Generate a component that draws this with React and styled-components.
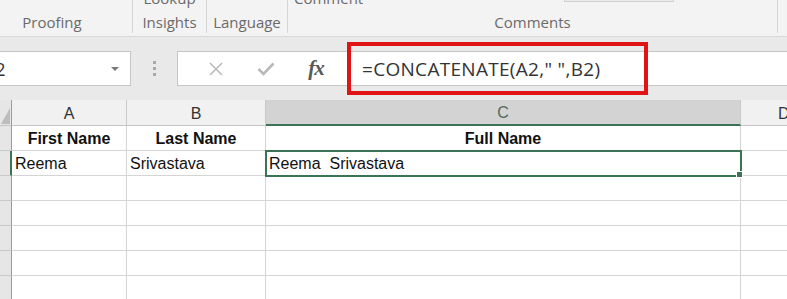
import React from "react"
import styled, { createGlobalStyle } from "styled-components"

const GlobalStyle = createGlobalStyle`
  html, body {
    margin: 0;
    padding: 0;
    background: #e9e9e9;
  }
  * {
    box-sizing: border-box;
  }
`

const green = "#3b7357"

const groups = [
  { label: "Proofing", top: "", width: 161, offset: -28 },
  { label: "Insights", top: "Lookup", width: 74 },
  { label: "Language", top: "", width: 81 },
  { label: "Comments", top: "Comment", width: 490, button: true, topLeft: true },
]

const columns = [
  { name: "A", width: 115 },
  { name: "B", width: 139 },
  { name: "C", width: 475, selected: true },
  { name: "D", width: 80 },
]

const rows = [
  { n: 1, cells: [{ text: "First Name", bold: true }, { text: "Last Name", bold: true }, { text: "Full Name", bold: true }, {}] },
  { n: 2, selected: true, cells: [{ text: "Reema" }, { text: "Srivastava" }, { text: "Reema\u00a0\u00a0Srivastava", active: true }, {}] },
  { n: 3, cells: [{}, {}, {}, {}] },
  { n: 4, cells: [{}, {}, {}, {}] },
  { n: 5, cells: [{}, {}, {}, {}] },
  { n: 6, cells: [{}, {}, {}, {}] },
  { n: 7, cells: [{}, {}, {}, {}] },
]

const App = () => {
  return (
    <Page>
      <GlobalStyle />
      <Ribbon>
        {groups.map((g) => (
          <Group key={g.label} $width={g.width} $offset={g.offset || 0}>
            {g.button && <GhostButton />}
            <TopText $left={g.topLeft}>{g.top || "\u00a0"}</TopText>
            <GroupLabel>{g.label}</GroupLabel>
          </Group>
        ))}
      </Ribbon>

      <FormulaRow>
        <NameBox>
          <span>C2</span>
          <DropArrow />
        </NameBox>
        <Grip>
          <i />
          <i />
          <i />
        </Grip>
        <ButtonBox>
          <IconButton>
            <svg width="16" height="16" viewBox="0 0 16 16">
              <path d="M2 2 L14 14 M14 2 L2 14" stroke="#b8b8b8" strokeWidth="1.5" fill="none" />
            </svg>
          </IconButton>
          <IconButton>
            <svg width="18" height="14" viewBox="0 0 18 14">
              <path d="M1.5 7 L6.5 12 L16.5 1.5" stroke="#b8b8b8" strokeWidth="2.6" fill="none" />
            </svg>
          </IconButton>
          <FxLabel>fx</FxLabel>
        </ButtonBox>
        <FormulaInput>
          =CONCATENATE(A2," ",B2)
          <Annotation />
        </FormulaInput>
      </FormulaRow>

      <Sheet>
        <Corner>
          <svg width="10" height="19" viewBox="0 0 10 19">
            <polygon points="9,2 9,18 0,18" fill="#bdbdbd" />
          </svg>
        </Corner>
        {columns.map((c) => (
          <ColHeader key={c.name} $selected={c.selected} $last={c.name === "D"}>
            {c.name}
          </ColHeader>
        ))}
        {rows.map((r) => (
          <React.Fragment key={r.n}>
            <RowHeader $selected={r.selected} />
            {r.cells.map((cell, i) => (
              <Cell
                key={i}
                $bold={cell.bold}
                $active={cell.active}
                $last={i === columns.length - 1}
              >
                {cell.text}
              </Cell>
            ))}
          </React.Fragment>
        ))}
      </Sheet>
    </Page>
  )
}

const Page = styled.div`
  width: 787px;
  height: 299px;
  overflow: hidden;
  display: flex;
  flex-direction: column;
  background: #e9e9e9;
`

const Ribbon = styled.div`
  height: 37px;
  flex-shrink: 0;
  display: flex;
  align-items: flex-start;
  background: #f3f3f3;
  border-bottom: 1px solid #d9d9d9;
  overflow: hidden;
`

const Group = styled.div`
  position: relative;
  width: ${(p) => p.$width}px;
  margin-left: ${(p) => p.$offset}px;
  height: 33px;
  display: flex;
  flex-direction: column;
  justify-content: flex-end;
  align-items: center;
  border-right: 1px solid #d6d6d6;
  flex-shrink: 0;
  font-family: "Open Sans", "Noto Sans", sans-serif;
  color: #6a6a6a;
`

const TopText = styled.div`
  align-self: ${(p) => (p.$left ? "flex-start" : "center")};
  padding-left: ${(p) => (p.$left ? "6px" : "0")};
  font-size: 15px;
  line-height: 20px;
  margin-bottom: 4px;
  white-space: nowrap;
  color: #6a6a6a;
`

const GroupLabel = styled.div`
  font-size: 15px;
  line-height: 20px;
  padding-bottom: 1px;
  white-space: nowrap;
`

const GhostButton = styled.div`
  position: absolute;
  top: -12px;
  left: 276px;
  width: 110px;
  height: 14px;
  border: 1px solid #d0d0d0;
  background: #ececec;
`

const FormulaRow = styled.div`
  display: flex;
  align-items: stretch;
  height: 35px;
  margin-top: 14px;
  flex-shrink: 0;
  font-family: "Open Sans", "Noto Sans", sans-serif;
`

const NameBox = styled.div`
  margin-left: -21px;
  width: 152px;
  display: flex;
  align-items: center;
  justify-content: space-between;
  padding: 0 11px 0 4px;
  background: #fff;
  border: 1px solid #c6c6c6;
  font-size: 18px;
  color: #333;
`

const DropArrow = styled.span`
  width: 0;
  height: 0;
  border-left: 4px solid transparent;
  border-right: 4px solid transparent;
  border-top: 4px solid #7a7a7a;
`

const Grip = styled.div`
  width: 46px;
  display: flex;
  flex-direction: column;
  align-items: center;
  justify-content: center;
  gap: 3px;

  i {
    display: block;
    width: 3px;
    height: 3px;
    background: #a9a9a9;
  }
`

const ButtonBox = styled.div`
  width: 164px;
  display: flex;
  align-items: center;
  background: #fff;
  border: 1px solid #c6c6c6;
  border-right: none;
  padding-left: 13px;
`

const IconButton = styled.div`
  width: 54px;
  display: flex;
  justify-content: center;
  align-items: center;
`

const FxLabel = styled.div`
  width: 54px;
  text-align: center;
  font-family: "Liberation Serif", "DejaVu Serif", serif;
  font-style: italic;
  font-weight: bold;
  font-size: 21px;
  color: #595959;
  letter-spacing: -1px;
`

const FormulaInput = styled.div`
  position: relative;
  flex: 1;
  display: flex;
  align-items: center;
  padding-left: 21px;
  background: #fff;
  border-top: 1px solid #c6c6c6;
  border-bottom: 1px solid #c6c6c6;
  font-size: 19px;
  letter-spacing: 0.3px;
  color: #333;
  white-space: nowrap;
`

const Annotation = styled.div`
  position: absolute;
  left: 6px;
  top: -10px;
  width: 301px;
  height: 53px;
  border: 4px solid #e01414;
  pointer-events: none;
`

const Sheet = styled.div`
  margin-top: 14px;
  display: grid;
  grid-template-columns: 12px ${columns.map((c) => `${c.width}px`).join(" ")};
  grid-template-rows: 26px;
  grid-auto-rows: 25px;
  background: #fff;
  font-family: "Liberation Sans", Arial, sans-serif;
  font-size: 16px;
`

const Corner = styled.div`
  background: #e6e6e6;
  border-right: 1px solid #9c9c9c;
  border-bottom: 1px solid #c4c4c4;
  display: flex;
  align-items: flex-end;
  justify-content: flex-end;
  overflow: hidden;
`

const ColHeader = styled.div`
  display: flex;
  align-items: center;
  justify-content: ${(p) => (p.$last ? "flex-start" : "center")};
  padding: 2px 0 0 ${(p) => (p.$last ? "37px" : "0")};
  background: ${(p) => (p.$selected ? "#d3d3d3" : "#f1f1f1")};
  color: ${(p) => (p.$selected ? "#4c6a5a" : "#333")};
  border-right: 1px solid #c9c9c9;
  border-bottom: ${(p) => (p.$selected ? `2px solid ${green}` : "1px solid #c4c4c4")};
  font-size: 16px;
`

const RowHeader = styled.div`
  background: #e6e6e6;
  border-right: ${(p) => (p.$selected ? `2px solid ${green}` : "1px solid #9c9c9c")};
  border-bottom: 1px solid #c9c9c9;
`

const Cell = styled.div`
  position: relative;
  display: flex;
  align-items: center;
  justify-content: ${(p) => (p.$bold ? "center" : "flex-start")};
  padding: 1px 3px 0;
  border-right: 1px solid ${(p) => (p.$last ? "#e4e4e4" : "#d4d4d4")};
  border-bottom: 1px solid #d4d4d4;
  font-weight: ${(p) => (p.$bold ? 700 : 400)};
  color: #111;
  white-space: nowrap;
  outline: ${(p) => (p.$active ? `2px solid ${green}` : "none")};
  outline-offset: -1px;
  z-index: ${(p) => (p.$active ? 1 : 0)};

  &::after {
    content: "";
    display: ${(p) => (p.$active ? "block" : "none")};
    position: absolute;
    right: -3px;
    bottom: -3px;
    width: 5px;
    height: 5px;
    background: ${green};
    border: 1px solid #fff;
  }
`

export default App
